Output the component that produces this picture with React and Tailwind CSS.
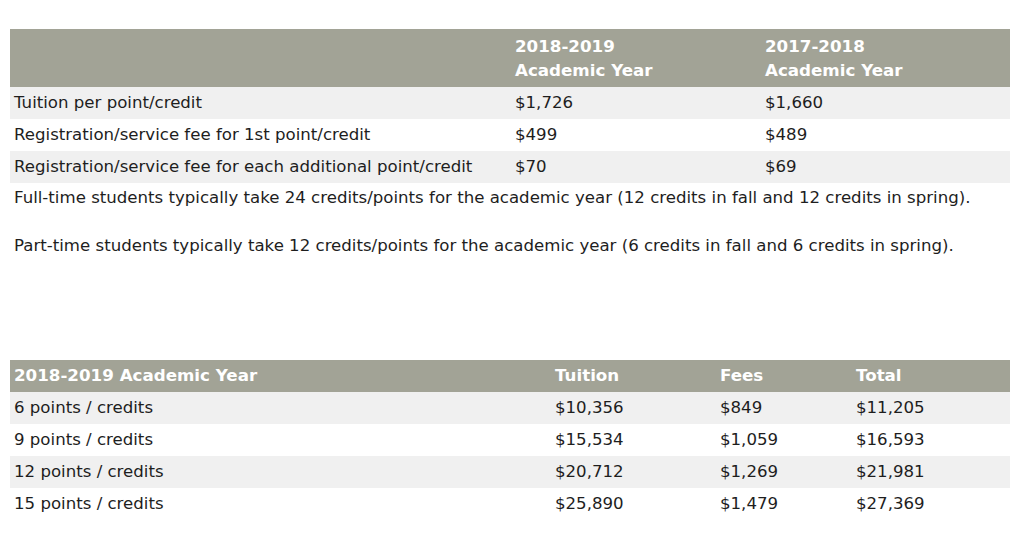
import React from 'react';

const font = { fontFamily: '"DejaVu Sans", "Liberation Sans", sans-serif' };

const feeRows = [
  ['Tuition per point/credit', '$1,726', '$1,660'],
  ['Registration/service fee for 1st point/credit', '$499', '$489'],
  ['Registration/service fee for each additional point/credit', '$70', '$69'],
];

const costRows = [
  ['6 points / credits', '$10,356', '$849', '$11,205'],
  ['9 points / credits', '$15,534', '$1,059', '$16,593'],
  ['12 points / credits', '$20,712', '$1,269', '$21,981'],
  ['15 points / credits', '$25,890', '$1,479', '$27,369'],
];

export default function App() {
  return (
    <div className="bg-white w-[1021px] h-[557px] overflow-hidden text-[#1e1e1e] text-[16.6px]" style={font}>
      <div className="pl-[10px] pt-[29px] w-[1010px]">
        {/* fee table */}
        <table className="w-[1000px] border-collapse">
          <thead>
            <tr className="bg-[#a2a396] text-white font-bold text-[16.7px] leading-[24px]">
              <th className="w-[501px] px-1 py-[5px] text-left"></th>
              <th className="w-[250px] px-1 py-[5px] text-left align-top">
                2018-2019
                <br />
                Academic Year
              </th>
              <th className="px-1 py-[5px] text-left align-top">
                2017-2018
                <br />
                Academic Year
              </th>
            </tr>
          </thead>
          <tbody>
            {feeRows.map((r, i) => (
              <tr key={i} className={`h-8 ${i % 2 === 0 ? 'bg-[#f0f0f0]' : 'bg-white'}`}>
                <td className="px-1">{r[0]}</td>
                <td className="px-1">{r[1]}</td>
                <td className="px-1">{r[2]}</td>
              </tr>
            ))}
          </tbody>
        </table>

        <p className="px-1 mt-[3px] leading-6">
          Full-time students typically take 24 credits/points for the academic year (12 credits in fall and 12 credits in spring).
        </p>
        <p className="px-1 mt-6 leading-6">
          Part-time students typically take 12 credits/points for the academic year (6 credits in fall and 6 credits in spring).
        </p>

        {/* cost table */}
        <table className="w-[1000px] border-collapse mt-[102px]">
          <thead>
            <tr className="h-8 bg-[#a2a396] text-white font-bold text-[16.7px]">
              <th className="w-[541px] px-1 text-left">2018-2019 Academic Year</th>
              <th className="w-[165px] px-1 text-left">Tuition</th>
              <th className="w-[136px] px-1 text-left">Fees</th>
              <th className="px-1 text-left">Total</th>
            </tr>
          </thead>
          <tbody>
            {costRows.map((r, i) => (
              <tr key={i} className={`h-8 ${i % 2 === 0 ? 'bg-[#f0f0f0]' : 'bg-white'}`}>
                {r.map((c, j) => (
                  <td key={j} className="px-1">{c}</td>
                ))}
              </tr>
            ))}
          </tbody>
        </table>
      </div>
    </div>
  );
}
